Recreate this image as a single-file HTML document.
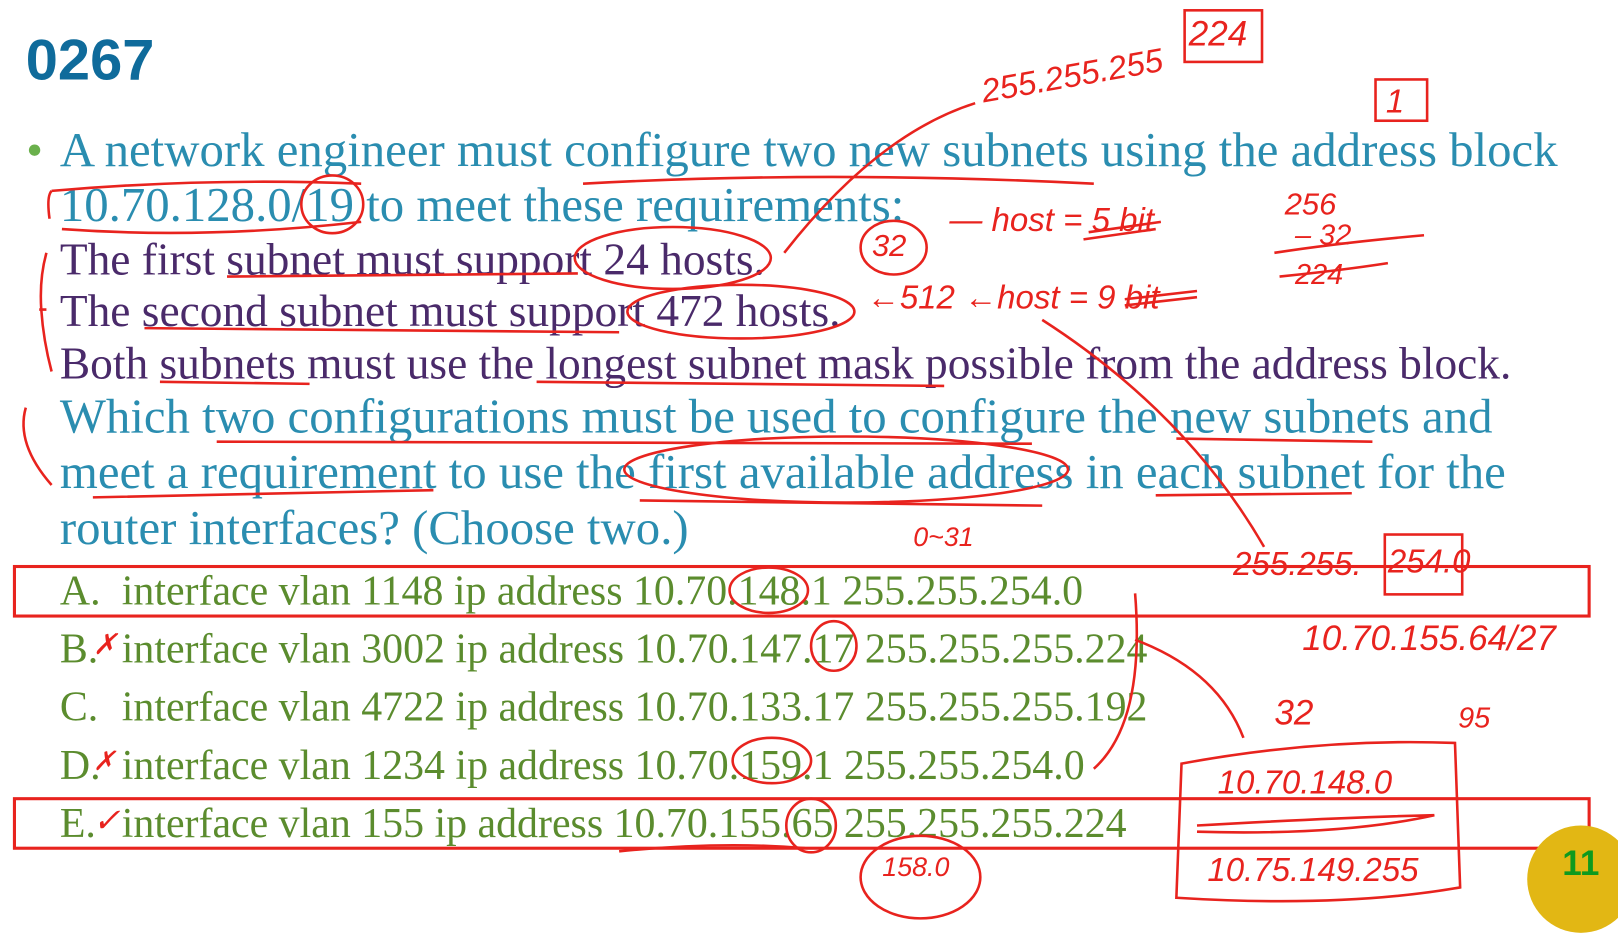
<!DOCTYPE html>
<html><head><meta charset="utf-8"><style>
html,body{margin:0;padding:0;background:#fff;overflow:hidden}
#w{position:absolute;left:0;top:0;width:1568px;height:894px;transform:scale(1.0319);transform-origin:0 0}
.t{position:absolute;white-space:nowrap;font-family:"Liberation Serif",serif;font-size:47.3px;line-height:1}
.teal{color:#2a8db0}.pur{color:#4a2a6a;font-size:44px}.grn{color:#5b8c2e}
.o{font-size:40.6px}
.h{position:absolute;font-family:"Liberation Sans",sans-serif;color:#e8231e;font-style:italic;white-space:nowrap}
</style></head><body><div id="w">
<div class="t" style="left:25px;top:30px;font-family:'Liberation Sans',sans-serif;font-weight:bold;font-size:56px;color:#0f6b9b">0267</div>
<div style="position:absolute;left:28px;top:140px;width:11px;height:11px;border-radius:50%;background:#6ab04c"></div>
<div class="t teal" style="left:58px;top:123px">A network engineer must configure two new subnets using the address block</div>
<div class="t teal" style="left:58px;top:176px">10.70.128.0/19 to meet these requirements:</div>
<div class="t pur" style="left:58px;top:230px">The first subnet must support 24 hosts.</div>
<div class="t pur" style="left:58px;top:280px">The second subnet must support 472 hosts.</div>
<div class="t pur" style="left:58px;top:331px">Both subnets must use the longest subnet mask possible from the address block.</div>
<div class="t teal" style="left:58px;top:381px">Which two configurations must be used to configure the new subnets and</div>
<div class="t teal" style="left:58px;top:435px">meet a requirement to use the first available address in each subnet for the</div>
<div class="t teal" style="left:58px;top:489px">router interfaces? (Choose two.)</div>
<div class="t grn o" style="left:58px;top:553px">A.</div><div class="t grn o" style="left:118px;top:553px">interface vlan 1148 ip address 10.70.148.1 255.255.254.0</div>
<div class="t grn o" style="left:58px;top:609px">B.</div><div class="t grn o" style="left:118px;top:609px">interface vlan 3002 ip address 10.70.147.17 255.255.255.224</div>
<div class="t grn o" style="left:58px;top:665px">C.</div><div class="t grn o" style="left:118px;top:665px">interface vlan 4722 ip address 10.70.133.17 255.255.255.192</div>
<div class="t grn o" style="left:58px;top:722px">D.</div><div class="t grn o" style="left:118px;top:722px">interface vlan 1234 ip address 10.70.159.1 255.255.254.0</div>
<div class="t grn o" style="left:58px;top:778px">E.</div><div class="t grn o" style="left:118px;top:778px">interface vlan 155 ip address 10.70.155.65 255.255.255.224</div>

<svg style="position:absolute;left:0;top:0" width="1568" height="894" fill="none" stroke="#e8231e" stroke-width="2.5">
<rect x="14" y="549" width="1526" height="48" stroke-width="3"/>
<rect x="14" y="774" width="1526" height="48" stroke-width="3"/>
<path d="M50 185 Q200 172 350 178 M48 212 Q45 190 50 185 M60 222 Q200 232 350 215"/>
<ellipse cx="322" cy="198" rx="30" ry="28"/>
<path d="M45 245 Q38 270 40 300 Q42 330 50 360 M45 300 L38 300"/>
<path d="M25 395 Q15 430 50 470"/>
<ellipse cx="652" cy="250" rx="95" ry="30"/>
<ellipse cx="718" cy="302" rx="110" ry="26"/>
<ellipse cx="866" cy="240" rx="32" ry="26"/>
<ellipse cx="820" cy="455" rx="215" ry="32"/>
<ellipse cx="745" cy="572" rx="38" ry="22"/>
<ellipse cx="808" cy="626" rx="22" ry="24"/>
<ellipse cx="748" cy="737" rx="38" ry="22"/>
<ellipse cx="786" cy="800" rx="24" ry="26"/>
<ellipse cx="892" cy="850" rx="58" ry="40"/>
<path d="M565 178 Q800 165 1060 178 M220 268 L560 265 M140 318 L600 322 M155 370 L300 372 M520 370 L915 374 M210 428 L1000 430 M90 482 L420 475 M1140 425 L1330 428 M1120 480 L1310 478 M620 485 L1010 490"/>
<path d="M760 245 Q850 130 945 100 M1010 310 Q1150 400 1225 530 M1100 575 Q1110 700 1060 745 M1100 620 Q1180 650 1205 715"/>
<path d="M1145 740 Q1280 715 1410 720 L1415 860 Q1300 880 1140 870 Z"/>
<rect x="1148" y="10" width="75" height="50"/>
<rect x="1333" y="77" width="50" height="40"/>
<rect x="1342" y="518" width="75" height="58"/>
<path d="M1235 245 Q1300 235 1380 228 M1240 268 Q1300 262 1345 255"/>
<path d="M1055 225 L1125 215 M1050 232 L1120 222 M1090 290 L1160 282 M1090 296 L1160 288"/>
<path d="M1160 800 Q1300 792 1390 790 Q1300 810 1160 806"/>
<path d="M600 825 Q700 815 780 822"/>
</svg>
<div class="h" style="left:950px;top:55px;font-size:32px;transform:rotate(-10deg)">255.255.255</div>
<div class="h" style="left:1152px;top:14px;font-size:34px">224</div>
<div class="h" style="left:1343px;top:80px;font-size:32px">1</div>
<div class="h" style="left:845px;top:222px;font-size:30px">32</div>
<div class="h" style="left:920px;top:195px;font-size:32px">— host = 5 bit</div>
<div class="h" style="left:840px;top:270px;font-size:32px">←512 ←host = 9 bit</div>
<div class="h" style="left:1245px;top:182px;font-size:30px">256</div>
<div class="h" style="left:1255px;top:212px;font-size:28px">– 32</div>
<div class="h" style="left:1255px;top:250px;font-size:28px">224</div>
<div class="h" style="left:885px;top:505px;font-size:26px">0~31</div>
<div class="h" style="left:1195px;top:528px;font-size:32px">255.255.</div>
<div class="h" style="left:1345px;top:526px;font-size:32px">254.0</div>
<div class="h" style="left:1262px;top:600px;font-size:34px">10.70.155.64/27</div>
<div class="h" style="left:1235px;top:672px;font-size:34px">32</div>
<div class="h" style="left:1413px;top:680px;font-size:28px">95</div>
<div class="h" style="left:1180px;top:740px;font-size:32px">10.70.148.0</div>
<div class="h" style="left:1170px;top:825px;font-size:32px">10.75.149.255</div>
<div class="h" style="left:855px;top:825px;font-size:26px">158.0</div>
<div class="h" style="left:90px;top:608px;font-size:28px">✗</div>
<div class="h" style="left:90px;top:722px;font-size:26px">✗</div>
<div class="h" style="left:90px;top:776px;font-size:32px">✓</div>
<div style="position:absolute;left:1480px;top:800px;width:104px;height:104px;border-radius:50%;background:#e2b714;overflow:hidden"></div>
<div style="position:absolute;left:1514px;top:818px;font-family:'Liberation Sans',sans-serif;font-weight:bold;font-size:34px;color:#0e9a1e">11</div>
</div></body></html>
